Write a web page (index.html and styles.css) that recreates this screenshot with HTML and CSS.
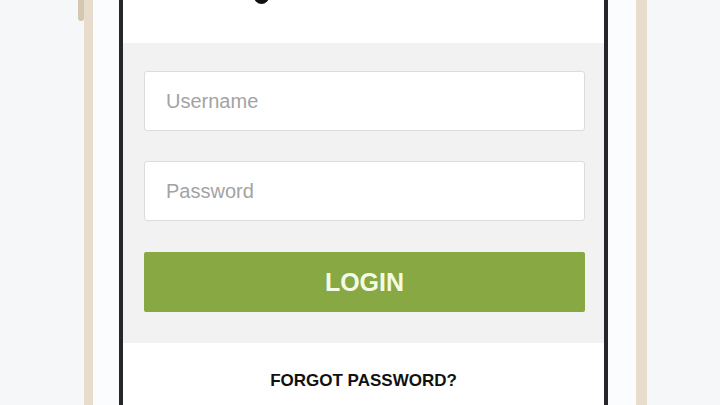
FILE: index.html
```html
<!DOCTYPE html>
<html lang="en">
<head>
<meta charset="utf-8">
<title>Login</title>
<link rel="stylesheet" href="styles.css">
</head>
<body>
<div class="stage">
  <div class="phone">
    <span class="side-button"></span>
    <div class="bezel">
      <div class="screen">
        <header class="top">
          <span class="logo-mark"></span>
        </header>
        <form class="form">
          <input class="field" type="text" placeholder="Username">
          <input class="field" type="password" placeholder="Password">
          <button class="login" type="button">LOGIN</button>
        </form>
        <div class="footer">
          <a class="forgot" href="#">FORGOT PASSWORD?</a>
        </div>
      </div>
    </div>
  </div>
</div>
</body>
</html>
```
FILE: styles.css
```css
html, body {
  margin: 0;
  padding: 0;
}
body {
  background: #f6f7f8;
  font-family: "Liberation Sans", Arial, sans-serif;
  width: 720px;
  height: 405px;
  overflow: hidden;
}
.stage {
  display: flex;
  padding-left: 84px;
  height: 405px;
}
.phone {
  position: relative;
  display: flex;
  border-left: 9px solid #e8ddcd;
  border-right: 11px solid #e8ddcd;
  background: #fbfcfd;
}
.side-button {
  position: absolute;
  left: -15px;
  top: 0;
  width: 6px;
  height: 21px;
  background: #d4c6b1;
  border-radius: 0 0 3px 3px;
}
.bezel {
  display: flex;
  padding: 0 28px 0 26px;
}
.screen {
  width: 481px;
  border-left: 4px solid #26272b;
  border-right: 4px solid #26272b;
  background: #ffffff;
  display: flex;
  flex-direction: column;
}
.top {
  height: 43px;
  position: relative;
}
.logo-mark {
  position: absolute;
  left: 131px;
  top: -6px;
  width: 15px;
  height: 10px;
  background: #111;
  border-radius: 0 0 8px 8px;
}
.form {
  margin: 0;
  background: #f2f2f2;
  padding: 28px 19px 31px 21px;
  display: flex;
  flex-direction: column;
  gap: 30px;
}
.field {
  box-sizing: border-box;
  height: 60px;
  width: 100%;
  margin: 0;
  border: 1px solid #dcdcdc;
  border-radius: 3px;
  background: #fff;
  padding: 0 21px;
  font-family: "Liberation Sans", Arial, sans-serif;
  font-size: 20px;
  color: #333;
}
.field::placeholder {
  color: #a3a3a3;
}
.login {
  height: 60px;
  margin-top: 1px;
  border: 0;
  border-radius: 2px;
  background: #88a843;
  color: #f3fae6;
  font-family: "Liberation Sans", Arial, sans-serif;
  font-weight: bold;
  font-size: 25px;
  padding: 0;
}
.footer {
  flex: 1;
  display: flex;
  justify-content: center;
  padding-top: 28px;
}
.forgot {
  color: #111;
  text-decoration: none;
  font-weight: bold;
  font-size: 17px;
}
```
